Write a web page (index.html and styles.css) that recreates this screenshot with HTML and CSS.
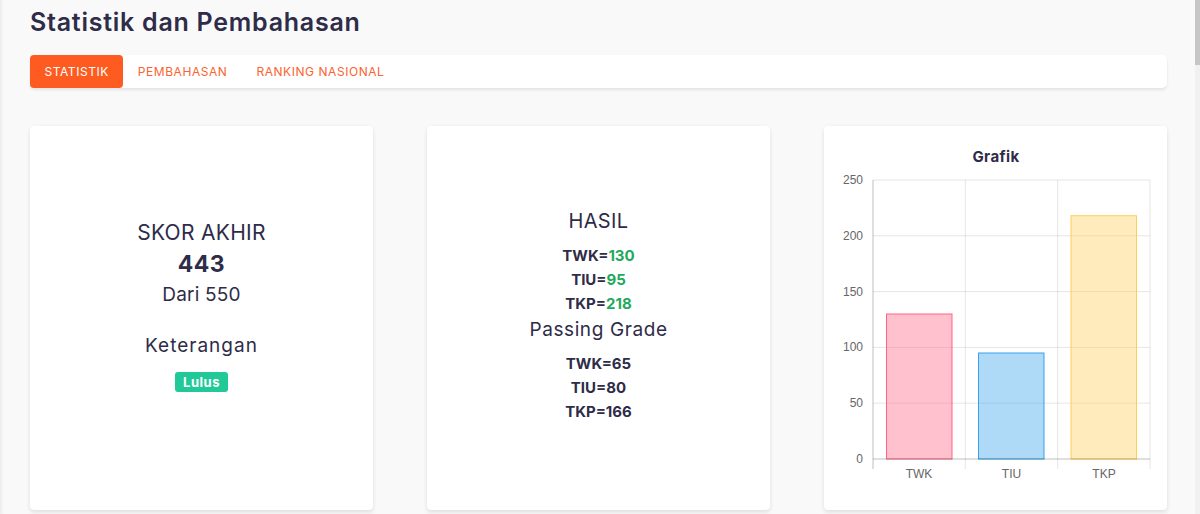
FILE: index.html
```html
<!DOCTYPE html>
<html lang="id">
<head>
<meta charset="utf-8">
<title>Statistik dan Pembahasan</title>
<link rel="stylesheet" href="styles.css">
</head>
<body>
<div class="page">
  <h1 class="title">Statistik dan Pembahasan</h1>
  <nav class="tabs">
    <a class="tab active">STATISTIK</a>
    <a class="tab">PEMBAHASAN</a>
    <a class="tab">RANKING NASIONAL</a>
  </nav>
  <div class="cards">
    <section class="card score">
      <div class="score-label">SKOR AKHIR</div>
      <div class="score-value">443</div>
      <div class="score-max">Dari 550</div>
      <div class="ket">Keterangan</div>
      <span class="badge">Lulus</span>
    </section>
    <section class="card result">
      <div class="res-title">HASIL</div>
      <div class="res-list">
        <div class="res-row">TWK=<span class="ok">130</span></div>
        <div class="res-row">TIU=<span class="ok">95</span></div>
        <div class="res-row">TKP=<span class="ok">218</span></div>
      </div>
      <div class="pg-title">Passing Grade</div>
      <div class="pg-list">
        <div class="res-row">TWK=65</div>
        <div class="res-row">TIU=80</div>
        <div class="res-row">TKP=166</div>
      </div>
    </section>
    <section class="card chart">
      <svg class="chart-svg" viewBox="0 0 343 384" width="343" height="384">
        <text x="172" y="36" class="chart-title" text-anchor="middle">Grafik</text>
        <g class="grid">
          <line x1="49" y1="54" x2="326" y2="54"/>
          <line x1="49" y1="109.8" x2="326" y2="109.8"/>
          <line x1="49" y1="165.6" x2="326" y2="165.6"/>
          <line x1="49" y1="221.4" x2="326" y2="221.4"/>
          <line x1="49" y1="277.2" x2="326" y2="277.2"/>
          <line x1="141.3" y1="54" x2="141.3" y2="343"/>
          <line x1="233.7" y1="54" x2="233.7" y2="343"/>
          <line x1="326" y1="54" x2="326" y2="343"/>
        </g>
        <rect class="bar pink" x="62.5" y="188" width="65.5" height="145"/>
        <rect class="bar blue" x="154.5" y="227" width="65.5" height="106"/>
        <rect class="bar yellow" x="247" y="89.7" width="65.5" height="243.3"/>
        <g class="axis">
          <line x1="49" y1="54" x2="49" y2="343"/>
          <line x1="49" y1="333" x2="326" y2="333"/>
        </g>
        <g class="ylabels">
          <text x="39" y="58">250</text>
          <text x="39" y="113.8">200</text>
          <text x="39" y="169.6">150</text>
          <text x="39" y="225.4">100</text>
          <text x="39" y="281.2">50</text>
          <text x="39" y="337">0</text>
        </g>
        <g class="xlabels">
          <text x="95" y="352">TWK</text>
          <text x="187.5" y="352">TIU</text>
          <text x="280" y="352">TKP</text>
        </g>
      </svg>
    </section>
  </div>
</div>
<div class="scrollbar"><div class="scroll-thumb"></div></div>
</body>
</html>
```
FILE: styles.css
```css
html {
  background: #f9f9f9;
}
body {
  margin: 0;
  height: 514px;
  overflow: hidden;
  font-family: Inter, "Noto Sans", sans-serif;
  color: #2e2c48;
  background: linear-gradient(to right, #ececec 0, #f9f9f9 4px);
}
.page {
  padding: 7px 33px 0 30px;
}
.title {
  margin: 0;
  font-size: 25px;
  line-height: 30px;
  font-weight: 600;
  letter-spacing: 0.75px;
  color: #2e2c48;
}
.tabs {
  margin-top: 18px;
  height: 33px;
  display: flex;
  background: #fff;
  border-radius: 5px;
  box-shadow: 0 2px 3px rgba(0, 0, 0, 0.09);
}
.tab {
  display: block;
  padding: 0 14.5px;
  line-height: 33px;
  font-size: 12px;
  color: #fb6330;
  letter-spacing: 0.55px;
}
.tab.active {
  background: #fd5b1f;
  color: #fff;
  border-radius: 4px;
}
.cards {
  margin-top: 38px;
  display: grid;
  grid-template-columns: repeat(3, 1fr);
  column-gap: 54px;
}
.card {
  height: 384px;
  box-sizing: border-box;
  background: #fff;
  border-radius: 4px;
  box-shadow: 0 3px 4px rgba(0, 0, 0, 0.08), 0 0 4px rgba(0, 0, 0, 0.04);
  text-align: center;
}
.score {
  padding-top: 93px;
}
.score-label {
  font-size: 21px;
  line-height: 28px;
  letter-spacing: 0.3px;
}
.score-value {
  font-size: 23px;
  line-height: 34px;
  font-weight: 700;
  letter-spacing: 0.5px;
}
.score-max {
  font-size: 19px;
  line-height: 28px;
  letter-spacing: 0.2px;
}
.ket {
  margin-top: 23px;
  font-size: 19px;
  line-height: 28px;
  letter-spacing: 1px;
}
.badge {
  display: inline-block;
  margin-top: 12px;
  height: 20px;
  line-height: 20px;
  padding: 0 8px;
  border-radius: 3px;
  background: #20c997;
  color: #fff;
  font-size: 13px;
  font-weight: 700;
  letter-spacing: 0.5px;
}
.result {
  padding-top: 81px;
}
.res-title {
  font-size: 20px;
  line-height: 28px;
  letter-spacing: 0.4px;
}
.res-list {
  margin-top: 9px;
}
.pg-list {
  margin-top: 8px;
}
.res-row {
  font-size: 15px;
  line-height: 24px;
  font-weight: 700;
}
.ok {
  color: #1fa95b;
}
.pg-title {
  font-size: 19px;
  line-height: 28px;
  letter-spacing: 0.6px;
}
.chart-svg {
  display: block;
}
.chart-title {
  font-family: Inter, "Noto Sans", sans-serif;
  font-size: 15px;
  font-weight: 700;
  letter-spacing: 0.4px;
  fill: #2e2c48;
}
.grid line {
  stroke: rgba(0, 0, 0, 0.1);
  stroke-width: 1;
}
.axis line {
  stroke: rgba(0, 0, 0, 0.25);
  stroke-width: 1;
}
.bar {
  stroke-width: 1;
}
.pink {
  fill: rgba(255, 99, 132, 0.4);
  stroke: rgb(255, 99, 132);
}
.blue {
  fill: rgba(54, 162, 235, 0.4);
  stroke: rgb(54, 162, 235);
}
.yellow {
  fill: rgba(255, 206, 86, 0.4);
  stroke: rgb(255, 206, 86);
}
.ylabels text,
.xlabels text {
  font-family: "Liberation Sans", Arial, sans-serif;
  font-size: 12px;
  fill: #666;
}
.ylabels text {
  text-anchor: end;
}
.xlabels text {
  text-anchor: middle;
}
.scrollbar {
  position: fixed;
  top: 0;
  right: 0;
  width: 5px;
  height: 100%;
  background: #f1f1f1;
}
.scroll-thumb {
  height: 65px;
  background: #c6c6c6;
}
```
